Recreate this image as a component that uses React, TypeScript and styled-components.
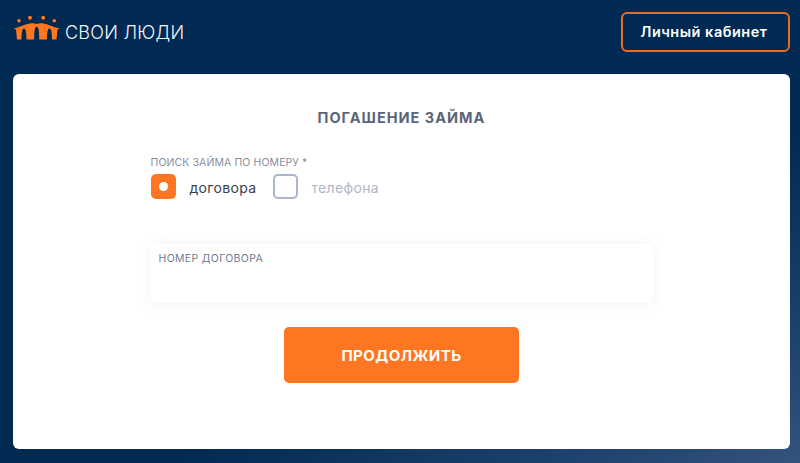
import React from "react";
import styled, { createGlobalStyle } from "styled-components";

const GlobalStyle = createGlobalStyle`
  html, body {
    margin: 0;
    padding: 0;
  }

  body {
    font-family: "Inter", "Noto Sans", sans-serif;
  }
`;

const Logo = () => (
  <LogoRow>
    <LogoIcon width="48" height="24" viewBox="0 0 48 24" fill="#ff7622">
      <circle cx="6" cy="4.8" r="1.8" />
      <circle cx="17" cy="1.8" r="2" />
      <circle cx="30.2" cy="1.8" r="2" />
      <circle cx="41.3" cy="4.8" r="1.8" />
      <path d="M0.5 12.5 C6 11.5 11 8.5 17 7.5 C20 7 22 8 23.7 8 C25.5 8 27.5 7 30.5 7.5 C36 8.5 41 11.5 47 12.5 L44.5 13.5 L43.5 23.5 L39 23.5 C39 17 38.4 12.5 36.5 12.5 C34.6 12.5 34 17 34 23.5 L26.2 23.5 C26.2 17 25.9 10.8 23.7 10.8 C21.5 10.8 21.2 17 21.2 23.5 L13.5 23.5 C13.5 17 12.9 12.5 11 12.5 C9.1 12.5 8.5 17 8.5 23.5 L4 23.5 L3 13.5 Z" />
    </LogoIcon>
    <LogoText>СВОИ ЛЮДИ</LogoText>
  </LogoRow>
);

const App = () => {
  return (
    <Page>
      <GlobalStyle />
      <Header>
        <Logo />
        <CabinetButton>Личный кабинет</CabinetButton>
      </Header>
      <Card>
        <Title>ПОГАШЕНИЕ ЗАЙМА</Title>
        <Form>
          <GroupLabel>ПОИСК ЗАЙМА ПО НОМЕРУ *</GroupLabel>
          <RadioRow>
            <RadioBox $checked />
            <RadioText $checked>договора</RadioText>
            <RadioBox />
            <RadioText>телефона</RadioText>
          </RadioRow>
          <Field>
            <FieldLabel>НОМЕР ДОГОВОРА</FieldLabel>
          </Field>
          <SubmitButton>ПРОДОЛЖИТЬ</SubmitButton>
        </Form>
      </Card>
    </Page>
  );
};

export default App;

const Page = styled.div`
  width: 800px;
  height: 463px;
  box-sizing: border-box;
  padding: 12px 10px 14px 13px;
  overflow: hidden;
  background: linear-gradient(
    152deg,
    #002a52 0%,
    #002a52 62%,
    #1f4570 88%,
    #35537c 100%
  );
`;

const Header = styled.header`
  display: flex;
  align-items: flex-start;
  justify-content: space-between;
  height: 62px;
`;

const LogoRow = styled.div`
  display: flex;
  align-items: center;
  gap: 4px;
  height: 36px;
  box-sizing: border-box;
  padding-top: 4px;
`;

const LogoIcon = styled.svg`
  margin-bottom: 8px;
`;

const LogoText = styled.span`
  color: #f2f5f8;
  font-size: 18px;
  font-weight: 300;
  letter-spacing: 0.25px;
`;

const CabinetButton = styled.button`
  width: 169px;
  height: 40px;
  padding: 0 3px 1px 0;
  border: 2px solid #eb6c20;
  border-radius: 6px;
  background: transparent;
  color: #ffffff;
  font-family: inherit;
  font-size: 14.5px;
  font-weight: 600;
  letter-spacing: 0.5px;
`;

const Card = styled.main`
  display: flex;
  flex-direction: column;
  align-items: center;
  height: 375px;
  box-sizing: border-box;
  padding-top: 35px;
  border-radius: 6px;
  background: #ffffff;
`;

const Title = styled.h1`
  margin: 0;
  color: #5a6579;
  font-size: 14.5px;
  line-height: 17px;
  font-weight: 700;
  letter-spacing: 1px;
`;

const Form = styled.form`
  display: flex;
  flex-direction: column;
  width: 502px;
  margin-top: 30px;
`;

const GroupLabel = styled.div`
  color: #858e9e;
  font-size: 10.5px;
  line-height: 13px;
  letter-spacing: 0.1px;
`;

const RadioRow = styled.div`
  display: flex;
  align-items: center;
  height: 25px;
  margin-top: 5px;
`;

const RadioBox = styled.span<{ $checked?: boolean }>`
  display: flex;
  align-items: center;
  justify-content: center;
  width: 25px;
  height: 25px;
  box-sizing: border-box;
  border: ${(p) => (p.$checked ? "none" : "2px solid #a9b5cc")};
  border-radius: 5px;
  background: ${(p) => (p.$checked ? "#ff7622" : "#ffffff")};

  &::after {
    content: "";
    display: ${(p) => (p.$checked ? "block" : "none")};
    width: 9px;
    height: 9px;
    border-radius: 50%;
    background: #ffffff;
  }
`;

const RadioText = styled.span<{ $checked?: boolean }>`
  width: ${(p) => (p.$checked ? "83px" : "auto")};
  margin: 2px 0 0 14px;
  color: ${(p) => (p.$checked ? "#3a4150" : "#aeb7c8")};
  font-size: 14px;
  letter-spacing: 0.33px;
`;

const Field = styled.div`
  height: 59px;
  box-sizing: border-box;
  margin-top: 45px;
  padding: 8px;
  border-radius: 5px;
  background: #ffffff;
  box-shadow: 0 1px 14px rgba(90, 110, 160, 0.09);
`;

const FieldLabel = styled.label`
  display: block;
  color: #717b8c;
  font-size: 10.5px;
  line-height: 13px;
  letter-spacing: 0.34px;
`;

const SubmitButton = styled.button`
  align-self: center;
  width: 235px;
  height: 56px;
  margin-top: 24px;
  padding: 0;
  border: none;
  border-radius: 5px;
  background: #ff7622;
  color: #ffffff;
  font-family: inherit;
  font-size: 15px;
  font-weight: 700;
  letter-spacing: 0.45px;
`;
